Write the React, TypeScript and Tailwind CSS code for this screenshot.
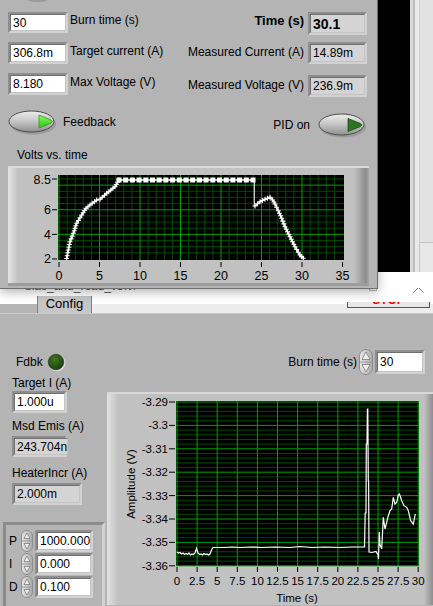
import React from "react";

type Pt = [number, number];

// spread points along a polyline, one every `step` px
function sample(pts: Pt[], step: number): Pt[] {
  const out: Pt[] = [];
  for (let i = 0; i < pts.length - 1; i++) {
    const [x1, y1] = pts[i];
    const [x2, y2] = pts[i + 1];
    const n = Math.max(1, Math.round(Math.hypot(x2 - x1, y2 - y1) / step));
    for (let k = 0; k < n; k++) out.push([x1 + ((x2 - x1) * k) / n, y1 + ((y2 - y1) * k) / n]);
  }
  out.push(pts[pts.length - 1]);
  return out;
}

const crosses = (pts: Pt[], s: number) =>
  pts
    .map(([x, y]) => `M${(x - s).toFixed(1)} ${y.toFixed(1)}h${2 * s}M${x.toFixed(1)} ${(y - s).toFixed(1)}v${2 * s}`)
    .join("");

const line = (pts: Pt[]) => pts.map(([x, y]) => `${x},${y}`).join(" ");

function NumBox({
  value,
  className,
  gray = false,
  bold = false,
}: {
  value: string;
  className: string;
  gray?: boolean;
  bold?: boolean;
}) {
  return (
    <div
      className={`flex shrink-0 border-2 border-t-[#8e8e8e] border-l-[#8e8e8e] border-r-[#d2d2d2] border-b-[#d2d2d2] ${className}`}
    >
      <div
        className={`flex flex-1 items-center border border-t-[#707070] border-l-[#707070] border-r-[#c4c4c4] border-b-[#c4c4c4] pl-[2px] leading-none ${
          gray ? "bg-[#d4d4d4]" : "bg-white"
        } ${bold ? "text-[14px] font-bold" : "text-[12px]"}`}
      >
        {value}
      </div>
    </div>
  );
}

function Toggle({ on }: { on: boolean }) {
  return (
    <svg width="49" height="25" viewBox="0 0 49 25" className="shrink-0">
      <defs>
        <linearGradient id="tgl" x1="0" y1="0" x2="0" y2="1">
          <stop offset="0" stopColor="#ececec" />
          <stop offset="0.45" stopColor="#c9c9c9" />
          <stop offset="1" stopColor="#8f8f8f" />
        </linearGradient>
        <linearGradient id="tri-on" x1="0" y1="0" x2="0" y2="1">
          <stop offset="0" stopColor="#8cff5a" />
          <stop offset="1" stopColor="#24c414" />
        </linearGradient>
      </defs>
      <ellipse cx="25" cy="14" rx="23" ry="10.5" fill="#7c7c7c" opacity="0.45" />
      <ellipse cx="23.5" cy="11.5" rx="22.5" ry="10.5" fill="url(#tgl)" stroke="#4d4d4d" strokeWidth="1" />
      <path
        d={on ? "M31 5 L43 10 Q45.5 11.5 43 13 L31 18 Z" : "M30 5.5 L42.5 10.5 Q45 12 42.5 13.5 L30 18.5 Z"}
        fill={on ? "url(#tri-on)" : "#2e7420"}
        stroke={on ? "#2a9a18" : "#1f4d16"}
        strokeWidth="0.8"
      />
    </svg>
  );
}

function Spinner({ w, h }: { w: number; h: number }) {
  const m = h / 2;
  return (
    <svg width={w} height={h} viewBox={`0 0 ${w} ${h}`} className="shrink-0">
      <defs>
        <linearGradient id="spn" x1="0" y1="0" x2="1" y2="0">
          <stop offset="0" stopColor="#e8e8e8" />
          <stop offset="1" stopColor="#a9a9a9" />
        </linearGradient>
      </defs>
      <rect x="0.5" y="0.5" width={w - 1} height={h - 1} rx={(w - 1) / 2} fill="url(#spn)" stroke="#8c8c8c" />
      <line x1="1" y1={m} x2={w - 1} y2={m} stroke="#9a9a9a" />
      <polygon points={`${w / 2},3 ${w - 3},${m - 2.5} 3,${m - 2.5}`} fill="#eeeeee" stroke="#7c7c7c" strokeWidth="0.8" />
      <polygon points={`${w / 2},${h - 3} ${w - 3},${m + 2.5} 3,${m + 2.5}`} fill="#eeeeee" stroke="#7c7c7c" strokeWidth="0.8" />
    </svg>
  );
}

function Led() {
  return (
    <svg width="19" height="19" viewBox="0 0 19 19" className="shrink-0">
      <defs>
        <radialGradient id="led" cx="0.4" cy="0.35" r="0.7">
          <stop offset="0" stopColor="#3f7a22" />
          <stop offset="1" stopColor="#173a0c" />
        </radialGradient>
      </defs>
      <circle cx="10" cy="10" r="8.5" fill="#d6d6d6" />
      <circle cx="9" cy="9" r="7.8" fill="url(#led)" stroke="#303030" strokeWidth="0.6" />
    </svg>
  );
}

function VoltsGraph() {
  const X = (t: number) => 59 + 8.1 * t;
  const Y = (v: number) => 179 + (8.5 - v) * 12.3;
  const vMinor: number[] = [];
  for (let t = 1; t < 35; t++) if (t % 5) vMinor.push(X(t));
  const hMinor: number[] = [];
  for (let v = 2.5; v < 8.9; v += 0.5) if (v % 2) hMinor.push(Y(v));

  const ramp: Pt[] = [
    [66.7, 258.5], [68.3, 250], [70, 241.7], [73.3, 233.3], [76.7, 223.3], [81.7, 215],
    [86, 208.3], [90, 205], [96.7, 200], [100, 199.3], [106.7, 193.3], [115, 186.7], [119, 180],
  ];
  const tail: Pt[] = [
    [255, 206], [260, 201.7], [265, 199.3], [270, 197.3], [272.7, 200], [275, 204], [278.3, 210.7],
    [281.7, 218.3], [285, 226.7], [290, 236.7], [295, 246.7], [300, 255], [303.3, 258.3],
  ];
  const flat = sample([[119, 180], [253, 180]], 6.7);

  return (
    <svg width="361" height="120" viewBox="8 166 361 120" className="shrink-0 self-start">
      <defs>
        <linearGradient id="lb1" x1="0" y1="0" x2="1" y2="0">
          <stop offset="0" stopColor="#e4e4e4" />
          <stop offset="1" stopColor="#c1c1c1" />
        </linearGradient>
        <linearGradient id="rb1" x1="0" y1="0" x2="1" y2="0">
          <stop offset="0" stopColor="#c1c1c1" />
          <stop offset="0.8" stopColor="#8c8c8c" />
          <stop offset="1" stopColor="#a9a9a9" />
        </linearGradient>
        <clipPath id="pc1">
          <rect x="58" y="175" width="286" height="85" />
        </clipPath>
      </defs>
      <rect x="8" y="166" width="361" height="120" fill="#c1c1c1" />
      <rect x="8" y="166" width="10" height="120" fill="url(#lb1)" />
      <rect x="354" y="166" width="15" height="120" fill="url(#rb1)" />
      <rect x="8" y="166" width="361" height="2" fill="#dadada" />
      <rect x="8" y="283" width="361" height="3" fill="#9c9c9c" />
      <rect x="58" y="175" width="286" height="85" fill="#000" />
      <g clipPath="url(#pc1)">
        {vMinor.map((x) => (
          <line key={`vm${x}`} x1={x} y1="175" x2={x} y2="260" stroke="#004a00" />
        ))}
        {hMinor.map((y) => (
          <line key={`hm${y}`} x1="58" y1={y} x2="344" y2={y} stroke="#004a00" />
        ))}
        {[0, 5, 10, 15, 20, 25, 30].map((t) => (
          <line key={`vM${t}`} x1={X(t)} y1="175" x2={X(t)} y2="260" stroke="#00a000" />
        ))}
        {[4, 6, 8].map((v) => (
          <line key={`hM${v}`} x1="58" y1={Y(v)} x2="344" y2={Y(v)} stroke="#00a000" />
        ))}
        <polyline points={line(ramp)} fill="none" stroke="#fff" strokeWidth="1.3" />
        <path d={crosses(sample(ramp, 3), 2.5)} stroke="#fff" strokeWidth="1.1" fill="none" />
        <line x1="119" y1="180" x2="253" y2="180" stroke="#fff" strokeWidth="1.5" />
        {flat.map(([x, y]) => (
          <rect key={`f${x}`} x={x - 2.5} y={y - 2.5} width="5" height="5" fill="#fff" />
        ))}
        <line x1="254.3" y1="180" x2="254.3" y2="206" stroke="#fff" strokeWidth="1" />
        <polyline points={line(tail)} fill="none" stroke="#fff" strokeWidth="1.3" />
        <path d={crosses(sample(tail, 3), 2.5)} stroke="#fff" strokeWidth="1.1" fill="none" />
      </g>
      <g fontSize="12.5" fill="#000">
        {[
          ["8.5", 8.5],
          ["6", 6],
          ["4", 4],
          ["2", 2],
        ].map(([s, v]) => (
          <g key={`y${s}`}>
            <text x="51" y={Y(v as number) + 4.5} textAnchor="end">
              {s}
            </text>
            <line x1="52" y1={Y(v as number)} x2="57" y2={Y(v as number)} stroke="#000" />
          </g>
        ))}
        {[0, 5, 10, 15, 20, 25, 30, 35].map((t) => (
          <g key={`x${t}`}>
            <line x1={X(t)} y1="262" x2={X(t)} y2="267" stroke="#000" />
            <text x={X(t)} y="279.5" textAnchor="middle">
              {t}
            </text>
          </g>
        ))}
      </g>
    </svg>
  );
}

function AmplitudeGraph() {
  const X = (t: number) => 177 + 8.04 * t;
  const minor: number[] = [];
  for (let j = 1; j < 35; j++) if (j % 5) minor.push(403 + 4.68 * j);
  const labels = ["-3.29", "-3.3", "-3.31", "-3.32", "-3.33", "-3.34", "-3.35", "-3.36"];
  const xs = ["0", "2.5", "5", "7.5", "10", "12.5", "15", "17.5", "20", "22.5", "25", "27.5", "30"];
  const sig: Pt[] = [
    [177, 553], [178.5, 554], [180, 553.5], [181.5, 555], [183, 554], [184.5, 555.5], [186, 554.5],
    [187.5, 555.5], [189, 554], [190.5, 556], [192, 555], [193.5, 555.5], [195, 554], [196.5, 549.5],
    [198, 554], [199.5, 555.5], [201, 555], [202.5, 556], [204, 554.5], [205.5, 555.5], [207, 555],
    [208.5, 556], [210, 555], [211.5, 551], [213, 548.5], [225, 548.5], [232, 548], [240, 548.5],
    [252, 548], [262, 548.5], [275, 548], [290, 548.5], [300, 547.5], [312, 548.5], [325, 548],
    [340, 548.5], [352, 548], [364.5, 548], [365.2, 514], [366, 514], [366.3, 445], [367, 445],
    [367.4, 410], [367.8, 410], [368.3, 482], [368.6, 482], [369, 553], [372, 553.5], [376, 552.5],
    [378, 556], [378.5, 560], [379.3, 533], [380, 545.7], [381.7, 550], [383.3, 518.3], [385, 530],
    [386.7, 523.3], [388.3, 516.7], [390, 511.7], [391.7, 510], [393.3, 498.3], [395, 505],
    [396.7, 503.3], [398.3, 496], [399.5, 495], [401.7, 501.7], [404, 506.7], [406.7, 508.3],
    [408.3, 511.7], [410.7, 521.7], [413.3, 525], [415.3, 515],
  ];
  return (
    <svg width="326" height="213" viewBox="107 393 326 213" className="mt-[17px] shrink-0">
      <defs>
        <linearGradient id="lb2" x1="0" y1="0" x2="1" y2="0">
          <stop offset="0" stopColor="#e2e2e2" />
          <stop offset="1" stopColor="#c1c1c1" />
        </linearGradient>
        <linearGradient id="rb2" x1="0" y1="0" x2="1" y2="0">
          <stop offset="0" stopColor="#c1c1c1" />
          <stop offset="1" stopColor="#8e8e8e" />
        </linearGradient>
      </defs>
      <rect x="107" y="393" width="326" height="213" fill="#c1c1c1" />
      <rect x="107" y="393" width="11" height="213" fill="url(#lb2)" />
      <rect x="424" y="393" width="9" height="213" fill="url(#rb2)" />
      <rect x="107" y="393" width="326" height="2" fill="#d8d8d8" />
      <rect x="176" y="402" width="243" height="165" fill="#000" />
      {minor.map((y) => (
        <line key={`m${y}`} x1="176" y1={y} x2="419" y2={y} stroke="#004a00" />
      ))}
      {labels.map((_, k) => (
        <line key={`h${k}`} x1="176" y1={403 + 23.4 * k} x2="419" y2={403 + 23.4 * k} stroke="#00a000" />
      ))}
      {xs.map((_, k) => (
        <line key={`v${k}`} x1={X(2.5 * k)} y1="402" x2={X(2.5 * k)} y2="567" stroke="#00a000" />
      ))}
      <polyline points={line(sig)} fill="none" stroke="#fff" strokeWidth="1.2" />
      <g fontSize="11.5" fill="#000">
        {labels.map((s, k) => (
          <g key={s}>
            <text x="168" y={403 + 23.4 * k + 4} textAnchor="end">
              {s}
            </text>
            <line x1="169" y1={403 + 23.4 * k} x2="175" y2={403 + 23.4 * k} stroke="#000" />
          </g>
        ))}
        {xs.map((s, k) => (
          <g key={`x${s}`}>
            <line x1={X(2.5 * k)} y1="568" x2={X(2.5 * k)} y2="573" stroke="#000" />
            <text x={X(2.5 * k)} y="586" textAnchor="middle">
              {s}
            </text>
          </g>
        ))}
        <text x="297" y="603" textAnchor="middle">
          Time (s)
        </text>
        <text x="135" y="485" textAnchor="middle" transform="rotate(-90 135 485)">
          Amplitude (V)
        </text>
      </g>
    </svg>
  );
}

function PidRow({ label, value }: { label: string; value: string }) {
  return (
    <div className="flex items-center">
      <span className="w-[12px]">{label}</span>
      <Spinner w={12} h={22} />
      <NumBox value={value} className="ml-[2px] h-[22px] w-[58px]" />
    </div>
  );
}

function BottomWindow() {
  return (
    <div className="flex h-[334px] flex-col">
      {/* title bar: the upper part sits under the front window */}
      <div className="flex h-[24px] flex-col bg-white">
        <div className="h-[16px]" />
        <div className="flex h-[8px] items-start">
          <div className="ml-[25px] h-[6px] overflow-hidden">
            <span className="-mt-[9px] block text-[#555]">bias_and_read_v3.vi</span>
          </div>
          <div className="ml-[233px] h-[3px] w-[8px] border-x border-b border-[#b8b8b8]" />
          <svg width="11" height="6" viewBox="0 6 11 6" className="ml-[36px]">
            <path d="M0.5 0.5 L10.5 10.5 M10.5 0.5 L0.5 10.5" stroke="#777" strokeWidth="1" />
          </svg>
        </div>
      </div>
      <div className="flex h-[17px]">
        <div className="flex w-[37px] flex-col">
          <div className="h-[8px] bg-white" />
          <div className="flex-1 bg-[#b4b4b4]" />
        </div>
        <div className="w-[55px] border-x border-x-[#808080] bg-[#c6c6c6] pt-[1px] text-center text-[13px] leading-[14px]">
          Config
        </div>
        <div className="flex flex-1 bg-[linear-gradient(to_bottom,#ffffff_8px,#ececec_8px)]">
          <div className="ml-auto mr-[3px] mt-[6px] h-[6px] w-[83px] overflow-hidden border-x border-b border-[#555] bg-[#e8e8e8] text-center">
            <span className="-mt-[8px] block text-[12px] font-bold leading-[12px] text-[#ff0000]">STOP</span>
          </div>
        </div>
      </div>
      <div className="flex flex-1 flex-col overflow-hidden border-t border-[#c9c9c9] bg-[#b4b4b4] pt-[35px]">
        <div className="flex h-[26px] shrink-0 items-center">
          <span className="ml-[16px]">Fdbk</span>
          <span className="ml-[4px]">
            <Led />
          </span>
          <span className="ml-auto">Burn time (s)</span>
          <span className="ml-[2px] flex">
            <Spinner w={14} h={26} />
          </span>
          <NumBox value="30" className="ml-[2px] mr-[8px] h-[24px] w-[50px]" />
        </div>
        <div className="flex flex-1">
          <div className="flex w-[107px] shrink-0 flex-col items-start pl-[12px] pt-[1px]">
            <span>Target I (A)</span>
            <NumBox value="1.000u" className="mt-[1px] h-[22px] w-[55px]" />
            <span className="mt-[6px]">Msd Emis (A)</span>
            <NumBox value="243.704n" gray className="mt-[3px] h-[21px] w-[55px]" />
            <span className="mt-[9px]">HeaterIncr (A)</span>
            <NumBox value="2.000m" gray className="mt-[3px] h-[22px] w-[70px]" />
            <div className="-ml-[9px] mt-[17px] flex h-[92px] w-[102px] flex-col gap-[1px] border-[3px] border-t-[#8c8c8c] border-l-[#8c8c8c] border-r-[#d2d2d2] border-b-[#d2d2d2] pl-[3px] pt-[5px]">
              <PidRow label="P" value="1000.000" />
              <PidRow label="I" value="0.000" />
              <PidRow label="D" value="0.100" />
            </div>
          </div>
          <AmplitudeGraph />
        </div>
      </div>
    </div>
  );
}

function TopWindow() {
  return (
    <div className="absolute left-0 top-0 h-[289px] w-[378px] border-b border-r border-[#6e6e6e] bg-[#b4b4b4] shadow-[0_3px_10px_rgba(0,0,0,0.3)]">
      <div className="absolute left-[25px] top-[-7px] h-[9px] w-[25px] rounded-[50%] bg-[#999]" />
      <div className="flex flex-col pl-[8px] pr-[10px] pt-[12px]">
        <div className="flex items-start">
          <NumBox value="30" className="h-[21px] w-[60px]" />
          <span className="ml-[2px] mt-[1px]">Burn time (s)</span>
          <span className="ml-auto mt-[1px] text-[13px] font-bold leading-[16px]">Time (s)</span>
          <NumBox value="30.1" gray bold className="ml-[4px] h-[23px] w-[59px]" />
        </div>
        <div className="mt-[7px] flex items-start">
          <NumBox value="306.8m" className="h-[22px] w-[60px]" />
          <span className="ml-[2px] mt-[2px]">Target current (A)</span>
          <span className="ml-auto mt-[3px]">Measured Current (A)</span>
          <NumBox value="14.89m" gray className="ml-[4px] h-[22px] w-[59px]" />
        </div>
        <div className="mt-[9px] flex items-start">
          <NumBox value="8.180" className="h-[22px] w-[60px]" />
          <span className="ml-[2px] mt-[2px]">Max Voltage (V)</span>
          <span className="ml-auto mt-[5px]">Measured Voltage (V)</span>
          <NumBox value="236.9m" gray className="ml-[4px] mt-[2px] h-[22px] w-[59px]" />
        </div>
        <div className="mt-[13px] flex items-start">
          <Toggle on />
          <span className="ml-[6px] mt-[5px]">Feedback</span>
          <span className="ml-auto mt-[8px]">PID on</span>
          <span className="ml-[8px] mt-[3px] flex">
            <Toggle on={false} />
          </span>
        </div>
        <span className="ml-[9px] mt-[10px]">Volts vs. time</span>
        <div className="mt-[4px] flex">
          <VoltsGraph />
        </div>
      </div>
    </div>
  );
}

export default function App() {
  return (
    <div className="relative h-[606px] w-[433px] overflow-hidden bg-[#b4b4b4] font-['Liberation_Sans',Arial,sans-serif] text-[12px] leading-[14px] text-black">
      <div className="flex h-[272px]">
        <div className="w-[378px]" />
        <div className="w-[32px] bg-black" />
        <div className="flex flex-1">
          <div className="w-[3px] bg-[#d9d9d9]" />
          <div className="w-[2px] bg-[#bcbcbc]" />
          <div className="w-[4px] bg-[#e9e9e9]" />
          <div className="flex flex-1 flex-col bg-[#e2e2e2]">
            <div className="flex-1 border-l border-[#d0d0d0]" />
            <div className="h-[30px] border-l border-t border-[#c4c4c4] bg-[#e8e8e8]" />
          </div>
        </div>
      </div>
      <BottomWindow />
      <TopWindow />
    </div>
  );
}
